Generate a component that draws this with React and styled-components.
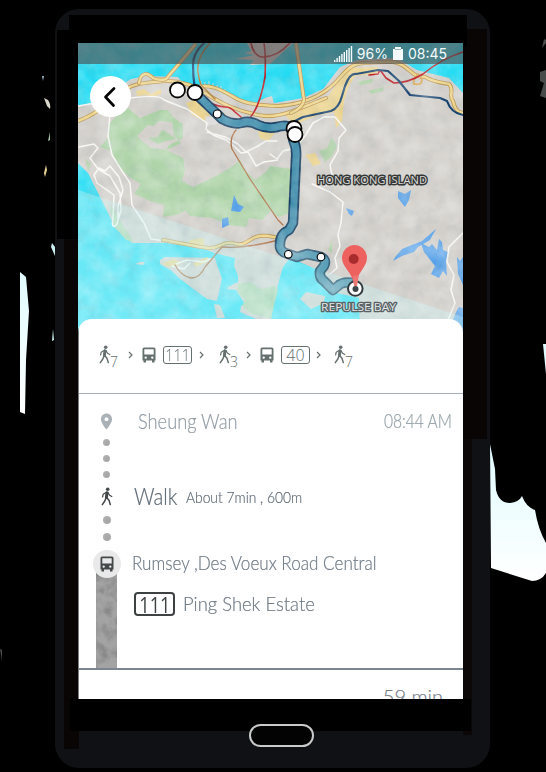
import React from "react";
import styled, { createGlobalStyle } from "styled-components";
import { MdPlace } from "react-icons/md";

const GlobalStyle = createGlobalStyle`
  *, *::before, *::after { box-sizing: border-box; }
  body { margin: 0; background: #000; overflow: hidden; }
`;

const Stage = styled.main`
  position: relative;
  width: 546px;
  height: 772px;
  padding: 9px 56px 0 55px;
  overflow: hidden;
  background: #000;
  font-family: Lato, "Open Sans", sans-serif;
`;

const Backdrop = styled.svg`
  position: absolute;
  inset: 0;
`;

const Phone = styled.div`
  position: relative;
  display: flex;
  flex-direction: column;
  align-items: flex-start;
  width: 435px;
  height: 759px;
  padding: 34px 0 0 23px;
  border-radius: 24px;
  overflow: hidden;
  background:
    linear-gradient(#000, #000) 2px 21px / 22px 209px no-repeat,
    linear-gradient(#000, #000) 14px 6px / 398px 31px no-repeat,
    linear-gradient(#000, #000) 15px 690px / 401px 32px no-repeat,
    linear-gradient(#090504, #090504) 9px 230px / 15px 510px no-repeat,
    linear-gradient(#090504, #090504) 408px 20px / 24px 410px no-repeat,
    linear-gradient(#0c0808, #0c0808) 408px 430px / 9px 296px no-repeat,
    #0f1115;
`;

const Screen = styled.div`
  display: flex;
  flex-direction: column;
  width: 385px;
  height: 656px;
  overflow: hidden;
  background: #fff;
`;

const MapArea = styled.section`
  position: relative;
  flex: none;
  height: 276px;
`;

const MapArt = styled.svg`
  display: block;
  width: 385px;
  height: 292px;
`;

const StatusBar = styled.div`
  position: absolute;
  inset: 0 0 auto 0;
  height: 21px;
  display: flex;
  align-items: center;
  justify-content: flex-end;
  padding-right: 16px;
  background: rgba(78, 73, 73, 0.62);
  color: #f5fafa;
  font: 400 14px/21px Inter, sans-serif;
`;

const Signal = styled.svg`
  width: 19px;
  height: 17px;
  margin-right: 4px;
`;

const Battery = styled.svg`
  width: 10px;
  height: 13px;
  margin: 0 5px 0 5px;
`;

const BackButton = styled.button`
  position: absolute;
  left: 12px;
  top: 33px;
  width: 41px;
  height: 41px;
  padding: 0;
  display: grid;
  place-items: center;
  border: 0;
  border-radius: 50%;
  background: #fff;
  svg { transform: translateX(-1px); }
`;

const Sheet = styled.section`
  position: relative;
  flex: none;
  height: 380px;
  display: flex;
  flex-direction: column;
  padding-left: 1px;
  border-radius: 14px 14px 0 0;
  background: linear-gradient(#7b7f80, #7b7f80) 0 8px / 1px 100% no-repeat, #fff;
`;

const Summary = styled.div`
  flex: 0 0 75px;
  display: flex;
  align-items: center;
  padding: 0 0 2px 18px;
  border-bottom: 1.5px solid #a3b1b5;
  color: #65706f;
`;

const WalkLeg = styled.span`
  display: flex;
  width: 22px;
  height: 20px;
  padding-left: 2px;
  margin-right: ${(p) => p.$gap || 0}px;
`;

const Minutes = styled.sub`
  align-self: flex-end;
  margin: 0 0 -3px -1px;
  font: 300 14px/13px "Open Sans", sans-serif;
`;

const WalkGlyph = styled.svg`
  flex: none;
  width: 12px;
  height: 19px;
`;

const BusGlyph = styled.svg`
  flex: none;
  width: 14px;
  height: 16px;
`;

const BusLeg = styled.span`
  display: flex;
  margin-right: 7px;
`;

const Chevron = styled.svg`
  width: 5px;
  height: 8px;
  margin-right: ${(p) => p.$gap}px;
`;

const RouteBadge = styled.span`
  display: flex;
  align-items: center;
  justify-content: center;
  flex: none;
  width: ${(p) => (p.$large ? 41 : 29)}px;
  height: ${(p) => (p.$large ? 24 : 18)}px;
  margin-right: ${(p) => p.$gap}px;
  border: ${(p) => (p.$large ? 2 : 1.5)}px solid currentColor;
  border-radius: ${(p) => (p.$large ? 4 : 3)}px;
  color: ${(p) => (p.$large ? "#3d4142" : "#657070")};
  font: ${(p) => (p.$large ? "400 22px" : "300 16px")}/1 "Open Sans", sans-serif;
`;

const BadgeNumber = styled.span`
  flex: none;
  transform: scaleX(${(p) => p.$condense});
`;

const Trip = styled.div`
  flex: 0 0 276px;
  display: grid;
  grid-template-columns: 55px 1fr;
  border-bottom: 2px solid #7b8590;
`;

const Rail = styled.div`
  display: flex;
  flex-direction: column;
  align-items: center;
  padding: 18px 0 0 0;
`;

const Pin = styled(MdPlace)`
  flex: none;
  width: 19px;
  height: 19px;
  color: #aab2b8;
`;

const Dot = styled.i`
  flex: none;
  width: ${(p) => p.$size}px;
  height: ${(p) => p.$size}px;
  margin-top: ${(p) => p.$gap}px;
  border-radius: 50%;
  background: radial-gradient(circle at 60% 65%, #a4a4a4, #b6b6b6);
`;

const Walker = styled.span`
  flex: none;
  display: flex;
  height: 19px;
  margin: 9px 0 1px;
  color: #414647;
`;

const StopMarker = styled.span`
  z-index: 1;
  flex: none;
  display: grid;
  place-items: center;
  width: 28px;
  height: 28px;
  margin-top: 9px;
  border-radius: 50%;
  background: #e9e9e9;
  color: #46494a;
`;

const RailBar = styled.svg`
  flex: 1;
  width: 21px;
  min-height: 0;
  margin-top: -7px;
`;

const Steps = styled.div`
  display: flex;
  flex-direction: column;
`;

const Step = styled.div`
  display: flex;
  align-items: center;
  height: ${(p) => p.$height}px;
  padding: 0 11px 0 ${(p) => p.$indent || 0}px;
`;

const Hand = styled.span`
  flex: none;
  width: ${(p) => p.$width}px;
  font-family: Lato, "Open Sans", sans-serif;
  font-weight: 300;
  font-size: ${(p) => p.$size}px;
  line-height: 1.2;
  white-space: nowrap;
  color: ${(p) => p.$color || "#6f7a85"};
  margin-left: ${(p) => p.$push || 0};
  transform: scaleX(${(p) => p.$condense || 1});
  transform-origin: left center;
  -webkit-text-stroke: 0.2px currentColor;
`;

const Footer = styled.div`
  display: flex;
  justify-content: flex-end;
  padding: 14px 20px 0 0;
`;

const HomeButton = styled.div`
  width: 65px;
  height: 23px;
  margin: 25px 0 0 171px;
  border: 2px solid #c9cbcb;
  border-radius: 12px;
  background: #030303;
`;

function Pavement() {
  return (
    <Backdrop width="546" height="772" viewBox="0 0 546 772" aria-hidden="true">
      <defs>
        <linearGradient id="paper" x1="0" y1="0" x2="0" y2="1">
          <stop offset="0" stopColor="#dffbff" />
          <stop offset="1" stopColor="#fff" />
        </linearGradient>
      </defs>
      <path fill="url(#paper)" d="M20 272L26 277L29 311L26 360L25 414L20 412Z" />
      <path fill="url(#paper)" d="M490 444L495 469L496 490Q499 503 510 503Q519 502 522 496Q526 507 535 510Q538 529 546 543V573Q541 581 532 581L491 568Z" />
      <path fill="#dffbff" d="M543 344H546V374Z" />
      <path fill="#9bb9c8" d="M42 76h2l-1 5z" />
      <path fill="#d9d6cc" d="M44 98l4 2q3 4 2 9l-3-3z" />
      <path fill="#a7c5a7" d="M50 132v8l-2 1z" />
      <path fill="#e8d393" d="M46 165l1 5-2 7-1-4z" />
      <path fill="#cceff2" d="M52 243l3 4v9l-4-9zM53 329l1 11-2 1z" />
      <path fill="#474b49" d="M544 39l2 1v3l-4 5zM540 72l6-2v28l-6-2 4-13-4-2zM0 649l2 1v11z" />
    </Backdrop>
  );
}

const highways = [
  "M78 121C92 116 104 108 122 92C133 82 149 83 164 81C180 80 184 84 197 87C213 84 222 91 232 96C242 103 254 105 278 106C306 104 324 94 335 83C346 71 351 63 365 63C381 63 392 59 402 65C412 71 413 77 425 77C433 82 444 83 449 84C455 90 448 96 453 101C455 109 457 112 463 113",
  "M139 83C141 71 148 73 153 78Q160 81 166 79L195 45",
  "M200 90Q219 102 231 107T258 115T290 112T326 98",
  "M296 43L304 100Q303 108 291 113",
  "M163 240C180 243 194 246 208 248C221 249 221 241 233 243C244 248 250 238 256 237C267 233 276 239 282 238",
];

const trails = [
  "M78 106Q100 102 130 98T164 100L187 109L207 123L206 129L213 135L226 140L235 147L241 153L248 152L256 166L264 162L278 160",
  "M110 115L108 136L112 155L122 171L130 183L132 205L144 223L151 239L165 241",
  "M79 147L94 144L98 148L90 158L98 169L110 176L120 193L121 210L117 224Q111 231 113 218L114 195L97 183L94 175L99 168L105 171L110 166L119 177L123 190L118 206L118 221",
  "M207 132L225 137L238 144L246 152L258 146L266 141L277 141",
  "M270 154L277 159L283 151L295 148L305 136L313 123L324 117L335 117L346 130L339 138L338 151L330 165L332 175L324 186",
  "M312 184L330 192L343 202L341 223L338 235L340 246L335 258L337 268L330 274",
  "M463 233L449 247L447 262L454 275L451 290L455 303L448 320",
  "M176 264L187 260L203 262L211 259M172 266L184 269L190 263",
];

const ROUTE =
  "M195 93L217 114L222 119Q233 125 241 123Q250 120 258 125Q267 129 277 127Q286 124 295 128L293 139Q297 148 296 158L293 223L289 230Q279 234 280 247Q281 252 288 254L297 257L307 254L321 257Q327 260 324 266L320 271Q319 278 324 281L333 290L338 286Q342 281 355 283";

function RouteMap() {
  return (
    <MapArt viewBox="78 43 385 292" role="img" aria-label="Route map">
      <defs>
        <filter id="wash" x="0" y="0" width="100%" height="100%">
          <feTurbulence type="fractalNoise" baseFrequency="0.05" numOctaves="4" seed="8" />
          <feColorMatrix values="0 0 0 0 1  0 0 0 0 1  0 0 0 0 1  1.1 0 0 0 -0.3" />
        </filter>
        <filter id="shade" x="0" y="0" width="100%" height="100%">
          <feTurbulence type="fractalNoise" baseFrequency="0.08" numOctaves="3" seed="21" />
          <feColorMatrix values="0 0 0 0 .25  0 0 0 0 .35  0 0 0 0 .4  0 1 0 0 -0.48" />
        </filter>
        <linearGradient id="sea" x1="0" y1="0" x2="0" y2="1">
          <stop offset="0" stopColor="#20dbf3" />
          <stop offset="1" stopColor="#3ce2f7" />
        </linearGradient>
        <linearGradient id="routeFill" gradientUnits="userSpaceOnUse" x1="0" y1="220" x2="0" y2="285">
          <stop offset="0" stopColor="#3f8cab" />
          <stop offset="1" stopColor="#68a9bd" />
        </linearGradient>
        <linearGradient id="routeEdge" gradientUnits="userSpaceOnUse" x1="0" y1="220" x2="0" y2="285">
          <stop offset="0" stopColor="#153c60" />
          <stop offset="1" stopColor="#457589" />
        </linearGradient>
      </defs>
      <rect x="78" y="43" width="385" height="292" fill="url(#sea)" />

      <g fill="#d2cfca">
        <path d="M78 106L92 103L107 98L125 83L131 79L145 76L150 76L178 77L183 84L196 84L227 92L240 101L256 103L265 98L272 96L274 103L303 98L323 89L340 67L357 60L397 58L417 70L449 78L463 93V335H360L359 298L333 292L318 270L290 258L283 267L279 281L273 305L269 335L258 320L240 312L241 306L245 304L236 290L227 289L228 287L238 282V276L234 266L235 258L214 253L200 247L187 246L166 243L132 243L115 228L108 213L100 197L88 173L78 163Z" />
        <path d="M247 43L251 51L245 53L254 55L235 59L254 60L250 65L270 64L293 43Z" />
        <path d="M160 260L165 257L215 258L218 268L222 278L217 301L207 299L192 288L179 278L172 271L160 264ZM135 264L140 262H145L143 265ZM214 304L220 305L225 318H217ZM300 299L306 292L325 296L324 303L311 309Z" />
      </g>
      <path d="M200 86L227 93M201 81v8M205 82v8M209 81v9M213 83v8M217 85v8M221 86v9M225 89v8" stroke="#c8d7d6" strokeWidth="1" fill="none" />

      <g fill="#afd4a9">
        <path fillRule="evenodd" d="M126 106L134 113L140 118L160 110L168 110L174 118L183 124V138L169 145L166 150L183 158L185 170L182 181L193 187L216 176L233 166L240 160L246 171L255 180L266 172L270 166L291 169V212L279 217L271 211L262 220L249 218L246 227L227 225L213 218L190 216L186 211L176 215L163 217L164 205L150 201L134 194L141 184L131 178L120 169L111 151L100 147L108 138L109 124ZM137 136L148 125L154 126L158 121L172 122L174 136L181 143L167 150L151 148L143 142Z" />
        <path d="M148 138L158 137L162 130L168 133L176 139L166 141L158 144Z" />
        <path d="M111 205L121 222L134 242L126 240L112 224ZM85 158L91 165L88 171ZM238 284L250 282L260 289L275 286L278 290L271 318L252 314L242 306L245 300L237 291ZM328 250L332 240L332 253ZM357 82L373 79L372 83L361 85ZM368 91L384 87L383 91L372 94ZM318 102L333 100L334 112L319 111ZM319 151L327 148L332 137L337 146L332 156L325 162Z" opacity=".9" />
      </g>

      <g fill="#ebd38c">
        <path d="M136 91L144 89L151 94L161 89V94L152 97L146 95L137 96ZM186 103L200 98L210 114L205 121L192 115ZM214 107L225 114L229 118L219 118ZM285 115L305 103L327 98L337 83L350 68L378 67V73L355 76L348 88L344 101L342 121L336 128L334 112L318 115L294 125ZM258 131L275 132L268 142L260 138ZM305 155L315 153L321 164L313 166ZM163 263L174 259L182 263L174 267L165 266ZM193 263L208 257L209 261L196 267ZM190 240L203 238L205 245L196 247L188 244Z" />
      </g>
      <path d="M205 116L223 119L218 124L206 126Z" fill="#dddcda" />

      <g fill="#57a1e8">
        <path d="M234 195L238 204L244 207L240 212L231 211L232 206ZM222 219L228 217L229 225L222 228ZM398 191L405 194L411 190L409 200L405 207L398 198ZM346 208L354 211L352 216L349 214ZM393 261L396 256L402 249L412 245L422 241L436 229L430 240L418 247L414 252L402 256ZM421 243L429 247L432 244L437 250L439 239L442 242L443 250L448 252L446 262L447 276L443 271L439 278L431 274L435 266L424 252ZM457 257L460 261L463 257V285L458 274ZM456 312L459 307L463 308V335H448L452 322Z" />
      </g>

      <g fill="none" strokeLinejoin="round" strokeLinecap="round">
        {trails.map((d) => <path key={d} d={d} stroke="#f8f7f4" strokeWidth="1.5" />)}
        {highways.map((d) => (
          <g key={d}>
            <path d={d} stroke="#b99352" strokeWidth="4" />
            <path d={d} stroke="#efd78c" strokeWidth="2.4" />
          </g>
        ))}
        <path d="M418 74Q412 81 414 84Q424 86 421 77" stroke="#dca74d" strokeWidth="1.7" />
        <path d="M210 43Q196 58 198 72T203 87L215 99" stroke="#b27b36" strokeWidth="1.5" />
        <path d="M236 130Q229 138 232 149L250 179L278 220L283 225M175 265Q181 276 191 278Q200 278 205 267L222 247Q235 248 249 246T279 240" stroke="#ab6b3d" strokeWidth="1.3" />
        <path d="M251 43Q253 54 261 57Q276 58 290 43M264 43Q266 56 265 77Q260 107 249 119M213 104Q219 107 225 107T235 112L241 117M369 75L378 74L380 70L386 78L394 83Q408 83 423 74Q441 59 463 52" stroke="#bd1319" strokeWidth="1.6" />
        <path d="M204 43Q193 53 193 65T195 90M295 121L303 117L331 111Q339 108 342 96L345 86Q350 73 356 74L378 70L388 71L399 81L410 95L440 98L447 101Q451 113 463 115" stroke="#14416e" strokeWidth="2.2" />
      </g>

      <path d="M78 190L463 317V335H78Z" fill="#c4f6f8" opacity=".36" />
      <rect x="78" y="43" width="385" height="292" filter="url(#shade)" opacity=".4" />

      <g fill="none" strokeLinejoin="round">
        <path d={ROUTE} stroke="url(#routeEdge)" strokeWidth="10.5" />
        <path d={ROUTE} stroke="url(#routeFill)" strokeWidth="7" />
      </g>
      <rect x="78" y="43" width="385" height="292" filter="url(#wash)" opacity=".5" />

      <g fill="#fff" stroke="#080808">
        <circle cx="177.500" cy="90" r="7.500" strokeWidth="1.800" />
        <circle cx="195" cy="92.500" r="7.500" strokeWidth="1.800" />
        <circle cx="294" cy="128.500" r="7.500" strokeWidth="1.800" />
        <circle cx="295" cy="134.500" r="7.500" strokeWidth="1.800" />
        <g strokeWidth="1.200">
          <circle cx="217.300" cy="114" r="4" />
          <circle cx="288.300" cy="254.300" r="3.800" />
          <circle cx="321" cy="257" r="3.800" />
        </g>
        <circle cx="355.300" cy="288.500" r="7.300" stroke="#333c40" strokeWidth="2" />
      </g>
      <path d="M354 284C352 272 342 267 342 258A12.500 13 0 0 1 367 258C367 267 357 273 356 284Z" fill="#ed625f" />
      <circle cx="353.700" cy="259" r="5" fill="#a92c2d" />
      <circle cx="355.500" cy="289" r="3" fill="#3d4548" />
      <path d="M353 276L354 286H357L359 275Z" fill="#ee7774" />

      <g fontFamily="Open Sans, sans-serif" strokeLinejoin="round" paintOrder="stroke">
        <text x="317" y="184" fontSize="11.500" textLength="110" lengthAdjust="spacingAndGlyphs" fill="#deddda" stroke="#343736" strokeWidth="2.800">HONG KONG ISLAND</text>
        <text x="321" y="311" fontSize="11.500" textLength="75" lengthAdjust="spacingAndGlyphs" fill="#e4e8e8" stroke="#586064" strokeWidth="2.600">REPULSE BAY</text>
      </g>
    </MapArt>
  );
}

function WalkIcon() {
  return (
    <WalkGlyph viewBox="0 0 12 19">
      <circle cx="6.700" cy="2.200" r="1.800" fill="currentColor" />
      <g fill="none" stroke="currentColor" strokeLinecap="round" strokeLinejoin="round">
        <path d="M6 5.800L5.400 10.500" strokeWidth="3" />
        <path d="M5 11L3.800 14L1.300 17.600M5.800 10.800L8 13.300L9.300 17.600" strokeWidth="1.500" />
        <path d="M5.500 5.300L2.200 7.200L1.600 10M7 5.600L8.600 8.300L10.800 9.500" strokeWidth="1.200" />
      </g>
    </WalkGlyph>
  );
}

function BusIcon() {
  return (
    <BusGlyph viewBox="0 0 14 16">
      <path
        fill="currentColor"
        fillRule="evenodd"
        d="M2 0.500H12Q13.500 0.500 13.500 2V13.500H12.500V15.500H10V13.500H4V15.500H1.500V13.500H0.500V2Q0.500 0.500 2 0.500ZM2.300 2.300V7.500H11.700V2.300ZM2.500 10.600A1.200 1.200 0 1 0 4.900 10.600A1.200 1.200 0 1 0 2.500 10.600ZM9.100 10.600A1.200 1.200 0 1 0 11.500 10.600A1.200 1.200 0 1 0 9.100 10.600Z"
      />
    </BusGlyph>
  );
}

function NextArrow({ gap }) {
  return (
    <Chevron viewBox="0 0 5 8" $gap={gap}>
      <path d="M1 1L4 4L1 7" fill="none" stroke="currentColor" strokeWidth="1.2" />
    </Chevron>
  );
}

function WalkFor({ minutes, gap }) {
  return (
    <WalkLeg $gap={gap}>
      <WalkIcon />
      <Minutes>{minutes}</Minutes>
    </WalkLeg>
  );
}

function BusBar() {
  return (
    <RailBar viewBox="0 0 21 97" preserveAspectRatio="none">
      <defs>
        <filter id="stone" x="0" y="0" width="100%" height="100%">
          <feTurbulence type="fractalNoise" baseFrequency="0.09" numOctaves="4" seed="4" />
          <feColorMatrix values="0 0 0 0 .25  0 0 0 0 .25  0 0 0 0 .25  2.600 0 0 0 -0.950" />
        </filter>
      </defs>
      <rect width="21" height="97" fill="#a3a3a3" />
      <rect width="21" height="97" filter="url(#stone)" />
    </RailBar>
  );
}

export default function App() {
  return (
    <Stage>
      <GlobalStyle />
      <Pavement />
      <Phone>
        <Screen>
          <MapArea>
            <RouteMap />
            <StatusBar>
              <Signal viewBox="0 0 19 17">
                {[0, 1, 2, 3, 4, 5, 6, 7].map((n) => (
                  <rect key={n} x={n * 2.4} y={15 - n * 2} width="1.4" height={2 + n * 2} fill="currentColor" />
                ))}
              </Signal>
              <span>96%</span>
              <Battery viewBox="0 0 10 13">
                <path d="M2 0h6v2h2v11H0V2h2z" fill="currentColor" />
                <path d="M2 2.500h6" stroke="#799ca0" strokeWidth=".7" />
              </Battery>
              <span>08:45</span>
            </StatusBar>
            <BackButton aria-label="Back">
              <svg width="14" height="22" viewBox="0 0 14 22">
                <path d="M11 2.500L2.500 11L10.500 19.500" fill="none" stroke="#050505" strokeWidth="2.700" strokeLinecap="round" strokeLinejoin="round" />
              </svg>
            </BackButton>
          </MapArea>
          <Sheet>
            <Summary>
              <WalkFor minutes="7" gap={9} />
              <NextArrow gap={9} />
              <BusLeg><BusIcon /></BusLeg>
              <RouteBadge $gap={7}><BadgeNumber $condense={0.9}>111</BadgeNumber></RouteBadge>
              <NextArrow gap={13} />
              <WalkFor minutes="3" gap={7} />
              <NextArrow gap={9} />
              <BusLeg><BusIcon /></BusLeg>
              <RouteBadge $gap={6}><BadgeNumber $condense={1}>40</BadgeNumber></RouteBadge>
              <NextArrow gap={11} />
              <WalkFor minutes="7" />
            </Summary>
            <Trip>
              <Rail>
                <Pin />
                <Dot $size={7} $gap={8} />
                <Dot $size={7} $gap={9} />
                <Dot $size={7} $gap={9} />
                <Walker><WalkIcon /></Walker>
                <Dot $size={8} $gap={9} />
                <Dot $size={8} $gap={9} />
                <StopMarker><BusIcon /></StopMarker>
                <BusBar />
              </Rail>
              <Steps>
                <Step $height={54} $indent={4}>
                  <Hand $size={22} $width={99} $condense={0.83} $color="#929ca6">Sheung Wan</Hand>
                  <Hand $size={19} $width={68} $condense={0.82} $color="#94a1a7" $push="auto">08:44 AM</Hand>
                </Step>
                <Step $height={98}>
                  <Hand $size={23} $width={43} $condense={0.88} $color="#5f6b76">Walk</Hand>
                  <Hand $size={16} $width={116} $condense={0.865} $color="#5f6b76" $push="9px">About 7min , 600m</Hand>
                </Step>
                <Step $height={34}>
                  <Hand $size={19} $condense={0.9} $push="-2px">Rumsey ,Des Voeux Road Central</Hand>
                </Step>
                <Step $height={48}>
                  <RouteBadge $large $gap={8}><BadgeNumber $condense={0.83}>111</BadgeNumber></RouteBadge>
                  <Hand $size={19} $condense={0.97}>Ping Shek Estate</Hand>
                </Step>
              </Steps>
            </Trip>
            <Footer>
              <Hand $size={20} $color="#747e88">59 min</Hand>
            </Footer>
          </Sheet>
        </Screen>
        <HomeButton />
      </Phone>
    </Stage>
  );
}
